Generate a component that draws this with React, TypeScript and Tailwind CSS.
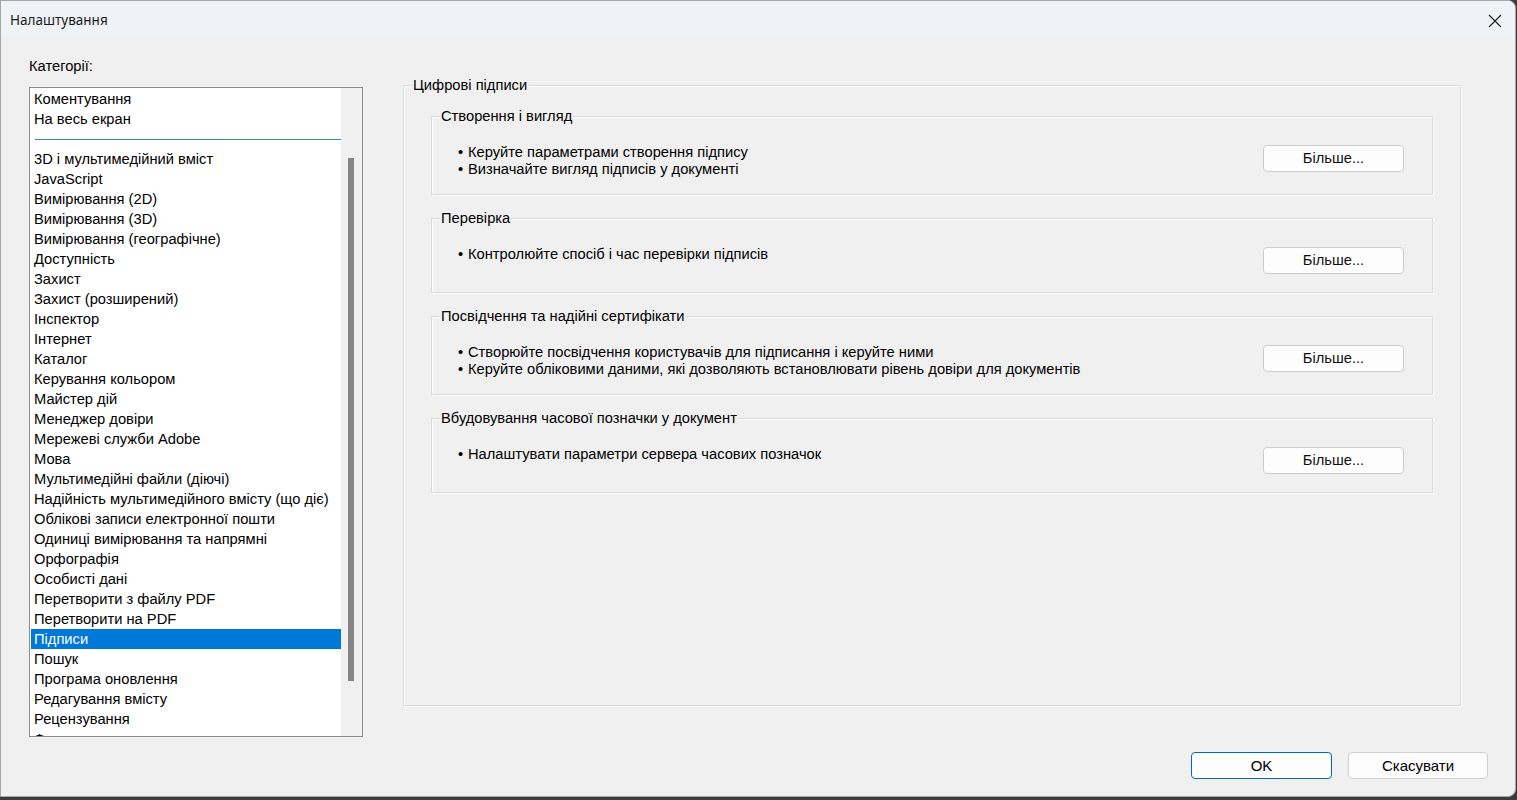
import React from 'react';

const CATEGORIES_TOP = ['Коментування', 'На весь екран'];

const CATEGORIES = [
  '3D і мультимедійний вміст',
  'JavaScript',
  'Вимірювання (2D)',
  'Вимірювання (3D)',
  'Вимірювання (географічне)',
  'Доступність',
  'Захист',
  'Захист (розширений)',
  'Інспектор',
  'Інтернет',
  'Каталог',
  'Керування кольором',
  'Майстер дій',
  'Менеджер довіри',
  'Мережеві служби Adobe',
  'Мова',
  'Мультимедійні файли (діючі)',
  'Надійність мультимедійного вмісту (що діє)',
  'Облікові записи електронної пошти',
  'Одиниці вимірювання та напрямні',
  'Орфографія',
  'Особисті дані',
  'Перетворити з файлу PDF',
  'Перетворити на PDF',
  'Підписи',
  'Пошук',
  'Програма оновлення',
  'Редагування вмісту',
  'Рецензування',
  'Форми',
];

const SECTIONS: { title: string; lines: string[]; height: string }[] = [
  {
    title: 'Створення і вигляд',
    lines: ['Керуйте параметрами створення підпису', 'Визначайте вигляд підписів у документі'],
    height: 'h-[79px]',
  },
  {
    title: 'Перевірка',
    lines: ['Контролюйте спосіб і час перевірки підписів'],
    height: 'h-[75px]',
  },
  {
    title: 'Посвідчення та надійні сертифікати',
    lines: [
      'Створюйте посвідчення користувачів для підписання і керуйте ними',
      'Керуйте обліковими даними, які дозволяють встановлювати рівень довіри для документів',
    ],
    height: 'h-[79px]',
  },
  {
    title: 'Вбудовування часової позначки у документ',
    lines: ['Налаштувати параметри сервера часових позначок'],
    height: 'h-[75px]',
  },
];

function GroupLabel({ children }: { children: React.ReactNode }) {
  return (
    <span className="absolute -top-[10px] left-[8px] bg-[#f0f0f0] px-px leading-[18px] text-[#000]">
      {children}
    </span>
  );
}

function Section({ title, lines, height }: { title: string; lines: string[]; height: string }) {
  return (
    <div
      className={`relative ${height} border border-[#d9d9d9] shadow-[inset_1px_1px_0_#ffffff,1px_1px_0_#ffffff]`}
    >
      <GroupLabel>{title}</GroupLabel>
      <div className="flex items-start justify-between pl-[26px] pr-[28px] pt-[27px]">
        <div className="leading-[17px]">
          {lines.map((line) => (
            <div key={line} className="flex">
              <span className="w-[10px] shrink-0">•</span>
              <span>{line}</span>
            </div>
          ))}
        </div>
        <button className="mt-px h-[27px] w-[141px] rounded-[4px] border border-[#cccccc] bg-[#fdfdfd] text-[14.7px] leading-none text-[#111]">
          Більше...
        </button>
      </div>
    </div>
  );
}

export default function App() {
  return (
    <div className="h-[800px] w-full overflow-hidden bg-[#3c3c3c]">
      <div
        className="flex h-[797px] w-[1516px] flex-col overflow-hidden rounded-tr-[8px] rounded-br-[8px] border border-[#a8a8a8] bg-[#f0f0f0] text-[14.7px] text-[#000]"
        style={{ fontFamily: '"Liberation Sans", Arial, sans-serif' }}
      >
        {/* Title bar */}
        <div className="flex h-[37px] shrink-0 items-center justify-between bg-[#eff3f8] pl-[9px] pr-[13px] pt-[2px]">
          <span className="text-[13.5px] text-[#1a1a1a]" style={{ fontFamily: '"Noto Sans", sans-serif' }}>
            Налаштування
          </span>
          <svg width="14" height="14" viewBox="0 0 14 14" className="text-[#1a1a1a]">
            <path d="M1 1L13 13M13 1L1 13" stroke="currentColor" strokeWidth="1.1" fill="none" />
          </svg>
        </div>

        {/* Body */}
        <div className="flex shrink-0">
          {/* Categories */}
          <div className="flex flex-col pl-[28px] pt-[19px]">
            <div className="leading-[18px]">Категорії:</div>
            <div className="mt-[12px] flex h-[650px] w-[334px] border border-[#8c8c8c] bg-white">
              <div className="flex-1 overflow-hidden pt-px">
                {CATEGORIES_TOP.map((c) => (
                  <div key={c} className="ml-px h-[20px] pl-[3px] leading-[20px]">
                    {c}
                  </div>
                ))}
                <div className="flex h-[20px] items-start pl-[5px] pt-[10px]">
                  <div className="h-px w-full bg-[#3a84b4]" />
                </div>
                {CATEGORIES.map((c) => (
                  <div
                    key={c}
                    className={
                      c === 'Підписи'
                        ? 'ml-px h-[20px] bg-[#0078d7] pl-[3px] leading-[20px] text-white'
                        : 'ml-px h-[20px] pl-[3px] leading-[20px]'
                    }
                  >
                    {c}
                  </div>
                ))}
              </div>
              {/* Scrollbar */}
              <div className="w-[21px] shrink-0 bg-[#f0f0f0] pl-[7px] pt-[70px]">
                <div className="h-[523px] w-[6px] bg-[#858585]" />
              </div>
            </div>
          </div>

          {/* Digital signatures */}
          <div className="ml-[40px] pt-[47px]">
            <div className="relative h-[621px] w-[1058px] border border-[#d9d9d9] px-[27px] pt-[30px] shadow-[inset_1px_1px_0_#ffffff,1px_1px_0_#ffffff]">
              <GroupLabel>Цифрові підписи</GroupLabel>
              <div className="flex flex-col gap-[23px]">
                {SECTIONS.map((s) => (
                  <Section key={s.title} {...s} />
                ))}
              </div>
            </div>
          </div>
        </div>

        {/* Footer */}
        <div className="mt-[15px] flex justify-end gap-[16px] pr-[27px]">
          <button className="h-[27px] w-[141px] rounded-[4px] border border-[#0067c0] bg-[#fdfdfd] pb-px text-[15px] leading-none">
            OK
          </button>
          <button className="h-[27px] w-[140px] rounded-[4px] border border-[#d0d0d0] bg-[#fdfdfd] pb-px text-[15px] leading-none">
            Скасувати
          </button>
        </div>
      </div>
    </div>
  );
}
